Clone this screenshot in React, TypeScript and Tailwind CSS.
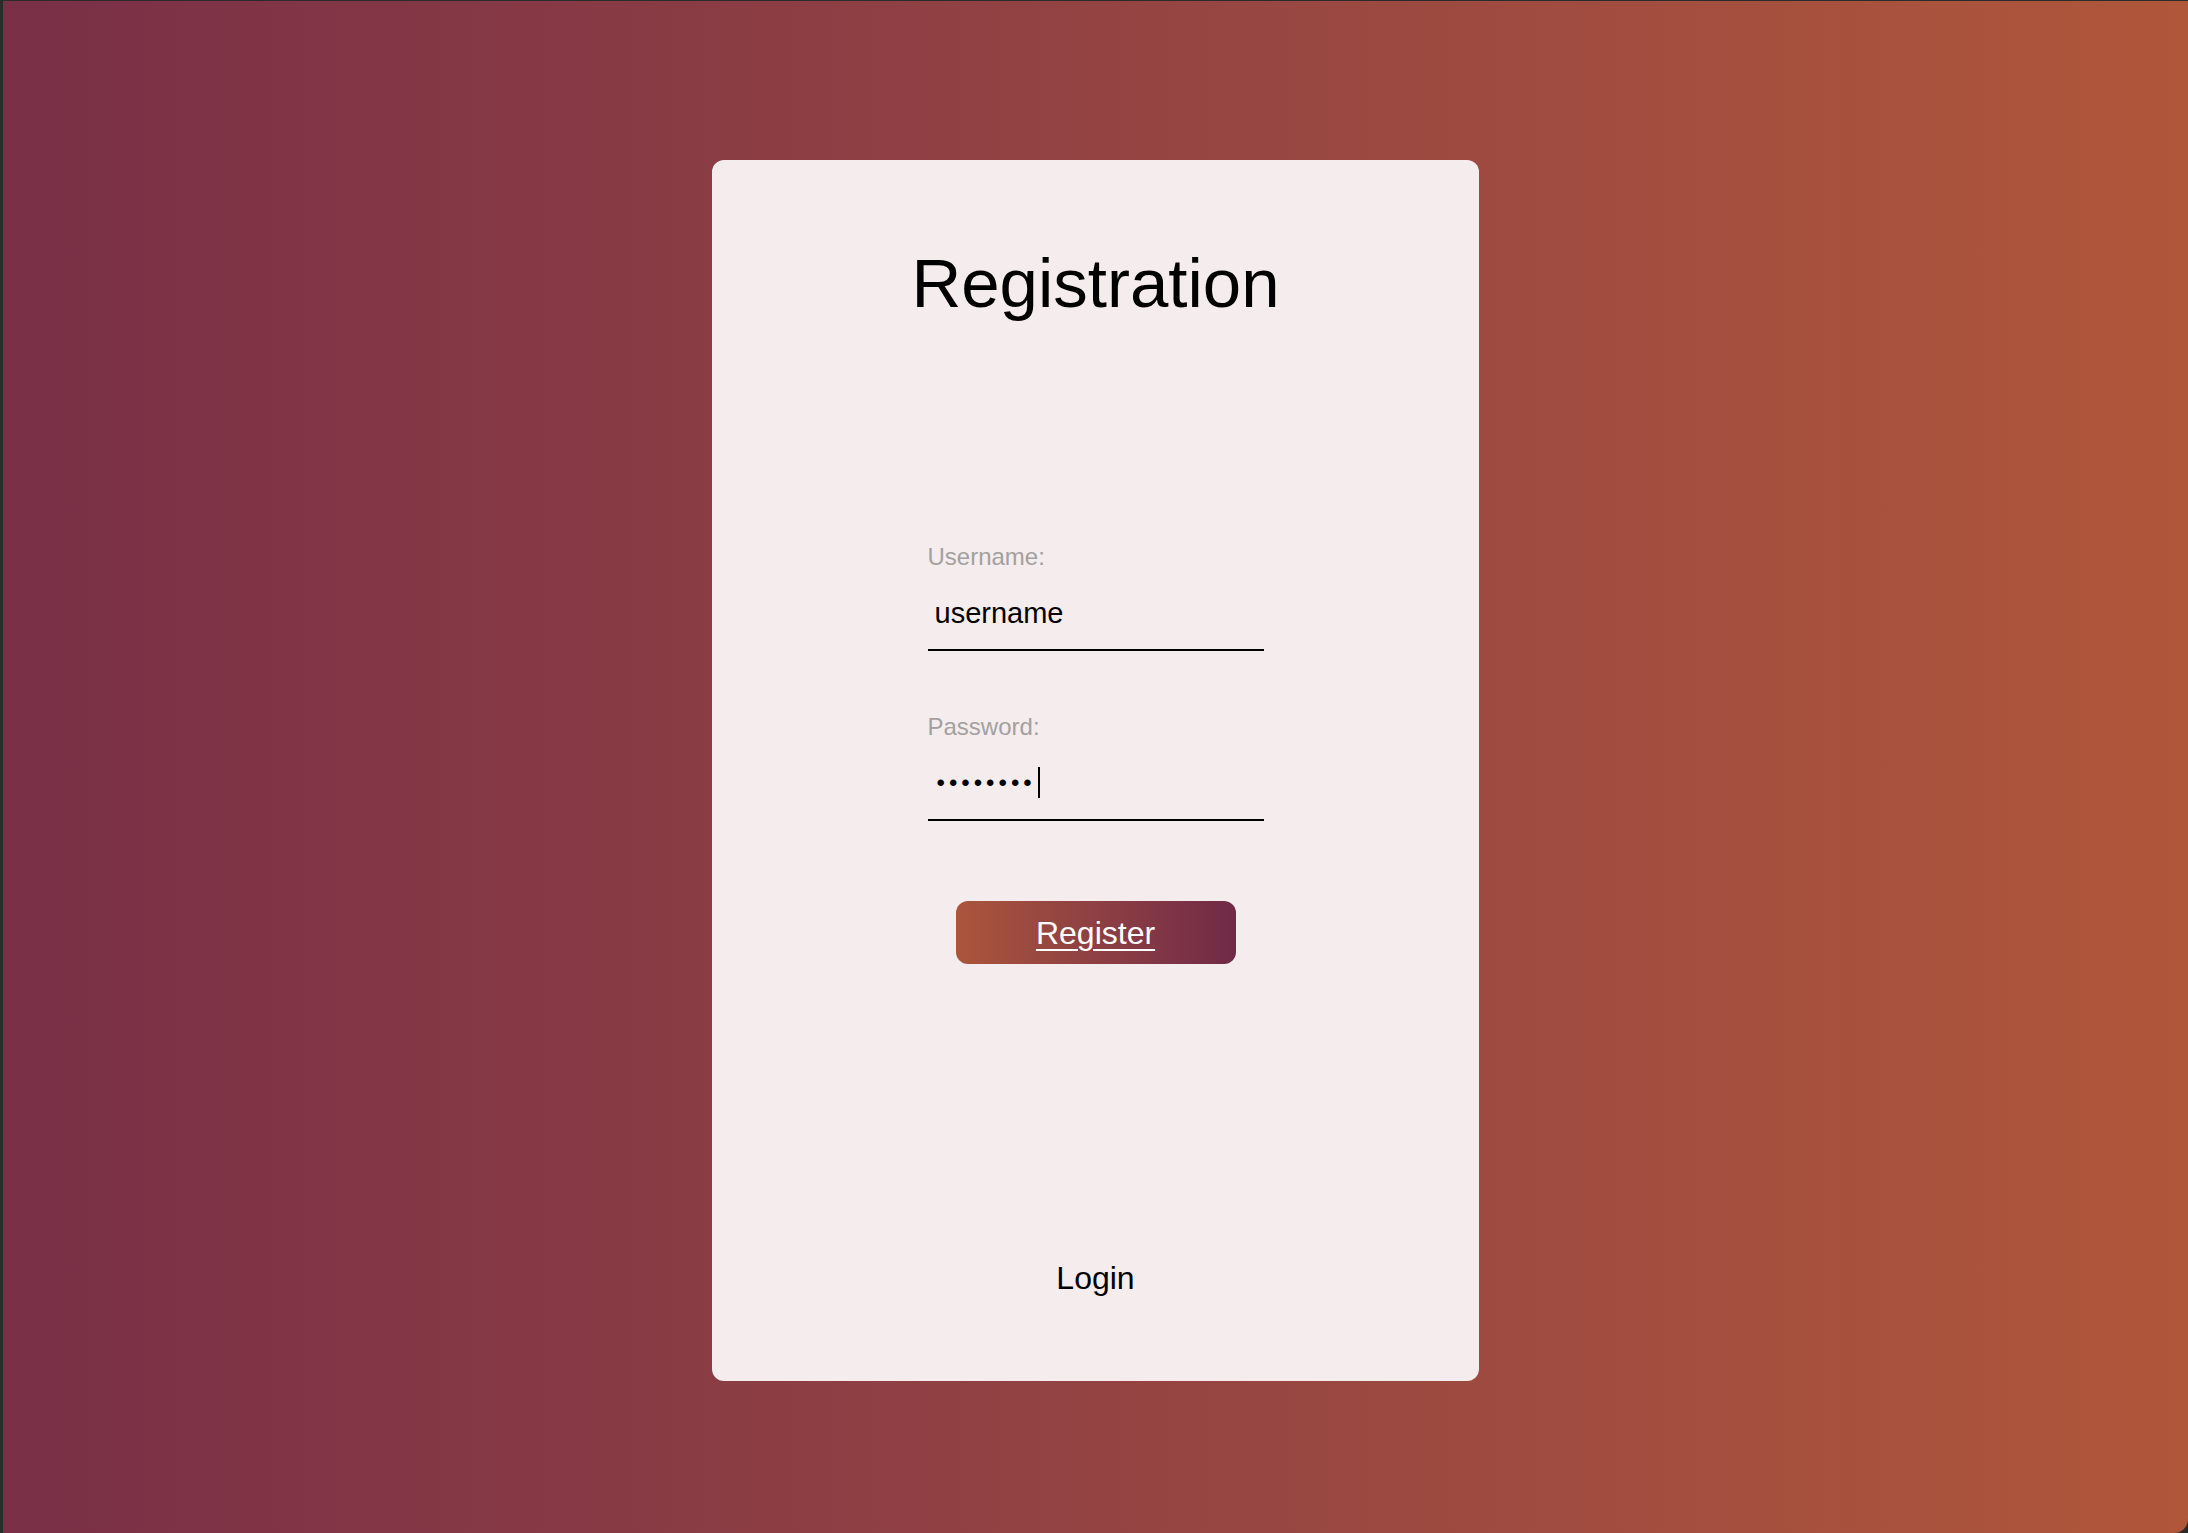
import { useState } from "react";

export default function App() {
  const [username, setUsername] = useState("username");
  const [password, setPassword] = useState("12345678");

  return (
    <div className="min-h-screen w-full bg-[#2b2b2b] pl-[3px] pt-px">
      <div
        className="flex h-[1532px] w-full justify-center rounded-br-[14px] bg-gradient-to-r from-[#792f46] to-[#b0573a]"
        style={{ fontFamily: '"Liberation Sans", Arial, sans-serif' }}
      >
        <div className="mt-[159px] flex h-[1221px] w-[767px] flex-col items-center rounded-[12px] bg-[#f5eded]">
          <h1 className="mt-[89px] text-[69px] leading-none font-normal text-black">Registration</h1>

          <form className="mt-[227px] flex w-[336px] flex-col" onSubmit={(e) => e.preventDefault()}>
            <label className="text-[24px] leading-none text-[#a3a0a0]" htmlFor="username">
              Username:
            </label>
            <input
              id="username"
              type="text"
              value={username}
              onChange={(e) => setUsername(e.target.value)}
              className="mt-5 h-[62px] border-b-2 border-black bg-transparent px-[7px] pb-3 text-[29px] text-black outline-none"
            />

            <label className="mt-16 text-[24px] leading-none text-[#a3a0a0]" htmlFor="password">
              Password:
            </label>
            <div className="relative mt-5">
              <input
                id="password"
                type="password"
                value={password}
                onChange={(e) => setPassword(e.target.value)}
                className="h-[62px] w-full border-b-2 border-black bg-transparent px-[9px] pb-3 text-[24px] tracking-[4px] text-black outline-none"
              />
              {/* caret */}
              <span className="pointer-events-none absolute top-[8px] left-[110px] h-[31px] w-[2px] bg-black" />
            </div>

            <button
              type="submit"
              className="mx-auto mt-20 h-[63px] w-[280px] rounded-[12px] bg-gradient-to-r from-[#ab553a] to-[#712a46] text-[32px] text-white underline decoration-2 underline-offset-[5px]"
            >
              Register
            </button>
          </form>

          <a href="#login" className="mt-[298px] text-[32px] leading-none text-black">
            Login
          </a>
        </div>
      </div>
    </div>
  );
}
